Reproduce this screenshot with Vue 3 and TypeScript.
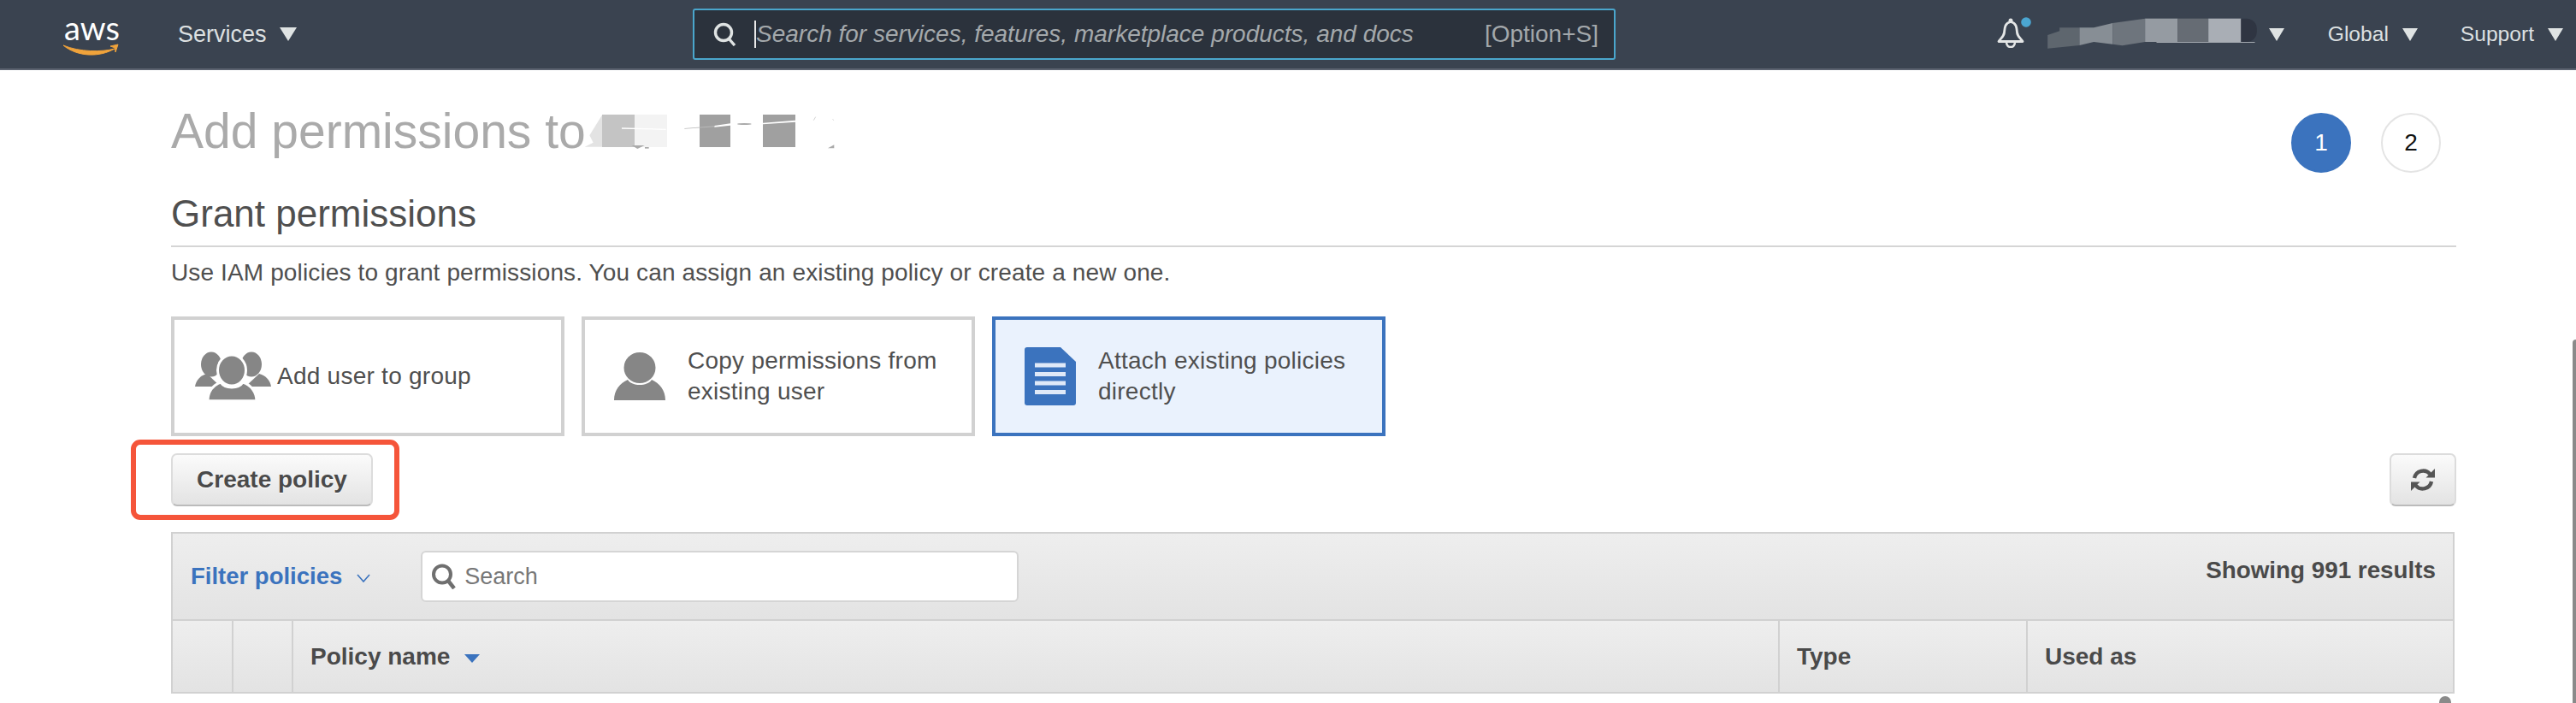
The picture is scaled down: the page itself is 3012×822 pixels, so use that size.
<script setup lang="ts">
const columns: { label: string; sorted?: boolean }[] = [
  { label: '' },
  { label: '' },
  { label: 'Policy name', sorted: true },
  { label: 'Type' },
  { label: 'Used as' },
]
</script>

<template>
  <div class="page">
    <header class="topbar">
      <div class="top-left">
        <svg class="logo" viewBox="0 -16 70 60" width="70" height="60">
          <text x="2" y="22" class="logo-text">aws</text>
          <path d="M1 28 C18 42 44 42 61 32 C46 36 20 36 1 28 Z" fill="#f0a33b" stroke="#f0a33b" stroke-width="1" />
          <path d="M56 29 L65 27 L62 36 L61.5 31 Z" fill="#f0a33b" stroke="#f0a33b" stroke-width="1" />
        </svg>
        <span class="nav services">Services</span>
        <i class="caret big"></i>
      </div>

      <div class="search">
        <svg class="search-icon" viewBox="0 0 28 28" width="28" height="28">
          <circle cx="12" cy="12" r="9.5" fill="none" stroke="#dfe3e3" stroke-width="3.4" />
          <path d="M18 19 L25 27" stroke="#dfe3e3" stroke-width="3.4" />
        </svg>
        <span class="cursor"></span>
        <span class="placeholder">Search for services, features, marketplace products, and docs</span>
        <span class="shortcut">[Option+S]</span>
      </div>

      <div class="top-right">
        <svg class="bell" viewBox="0 0 40 36" width="40" height="36">
          <path d="M16 5.5 C9 7 9 13 8.5 18 C8 23 4 25 2 28.5 L30 28.5 C28 25 24 23 23.5 18 C23 13 23 7 16 5.5 Z" fill="none" stroke="#e4e6e6" stroke-width="2.8" stroke-linejoin="round" />
          <path d="M11 29 C11 37 21 37 21 29" fill="none" stroke="#e4e6e6" stroke-width="2.6" />
          <circle cx="16" cy="4" r="2.5" fill="#e4e6e6" />
          <circle cx="34" cy="6" r="5.8" fill="#4ba6d1" />
        </svg>
        <svg class="redact" viewBox="225 25 740 120" width="247" height="40">
          <rect x="880" y="30" width="82" height="82" rx="36" fill="#2f3542" />
          <path d="M610 112 H955 V115 H610 Z" fill="#cfd2d5" opacity="0.7" />
          <path d="M228 88 L270 74 V62 H340 V124 L228 135 Z" fill="#5e666e" />
          <path d="M340 62 H390 L456 46 V120 L390 112 L340 124 Z" fill="#878e95" />
          <path d="M456 46 L570 30 V112 L490 125 L456 120 Z" fill="#6e757d" />
          <rect x="570" y="30" width="114" height="82" fill="#959ba2" />
          <rect x="684" y="30" width="108" height="82" fill="#666c74" />
          <rect x="792" y="30" width="114" height="82" fill="#a9aeb5" />
        </svg>
        <i class="caret first"></i>
        <span class="nav global">Global</span>
        <i class="caret"></i>
        <span class="nav support">Support</span>
        <i class="caret"></i>
      </div>
    </header>

    <main class="content">
      <div class="title-row">
        <div class="title-group">
          <h1 class="title">Add permissions to</h1>
          <svg class="title-redact" viewBox="60 30 900 150" width="300" height="50">
            <path d="M65 155 L95 140 L82 115 L125 45 L150 42 V155 Z" fill="#e3e3e3" />
            <rect x="126" y="42" width="114" height="114" fill="#c4c4c4" />
            <rect x="240" y="42" width="114" height="114" fill="#f3f3f3" />
            <path d="M195 88 L350 92 V96 L195 92 Z" fill="#fff" />
            <path d="M230 150 H275 L250 162 Z" fill="#aaa" />
            <path d="M276 156 H290 V161 H276 Z" fill="#aaa" />
            <rect x="468" y="42" width="108" height="114" fill="#a0a0a0" />
            <path d="M520 81 L576 73 V80 L520 86 Z" fill="#fff" />
            <path d="M415 90 L520 82 L520 85 L415 92 Z" fill="#bbb" />
            <ellipse cx="625" cy="75" rx="25" ry="3" fill="#aaa" />
            <rect x="690" y="42" width="114" height="114" fill="#a0a0a0" />
            <path d="M682 72 L804 62 V68 L690 76 Z" fill="#fff" />
            <path d="M918 160 L940 148 V160 Z" fill="#aaa" />
            <path d="M868 62 L875 50" stroke="#bbb" stroke-width="2" />
            <path d="M935 58 L938 62" stroke="#bbb" stroke-width="2" />
          </svg>
        </div>
        <div class="steps">
          <span class="step active">1</span>
          <span class="step">2</span>
        </div>
      </div>

      <h2 class="section">Grant permissions</h2>
      <p class="lead">Use IAM policies to grant permissions. You can assign an existing policy or create a new one.</p>

      <div class="cards">
        <div class="card card-group">
          <span class="card-icon">
            <svg viewBox="0 0 90 58" width="90" height="58">
              <ellipse cx="19" cy="15" rx="12" ry="14.5" fill="#868686" />
              <ellipse cx="66" cy="15" rx="12" ry="14.5" fill="#868686" />
              <path d="M0 41 C1 34 6 28 14 26 L30 41 Z" fill="#868686" />
              <path d="M89 41 C88 34 83 28 75 26 L59 41 Z" fill="#868686" />
              <ellipse cx="43" cy="22" rx="16.5" ry="18" fill="#868686" stroke="#fff" stroke-width="3" />
              <path d="M15 58 C15 47 21 39 30 36 C35 44 51 44 56 36 C65 39 72 47 72 58 Z" fill="#868686" stroke="#fff" stroke-width="3" />
              <rect x="10" y="56.5" width="70" height="2" fill="#fff" />
            </svg>
          </span>
          <span class="card-text">Add user to group</span>
        </div>
        <div class="card">
          <span class="card-icon">
            <svg viewBox="0 0 60 56" width="60" height="56">
              <ellipse cx="30" cy="18" rx="18.5" ry="18" fill="#868686" />
              <path d="M0 56 C0 44 7 36 16 32 C21 40 39 40 44 32 C53 36 60 44 60 56 Z" fill="#868686" />
            </svg>
          </span>
          <span class="card-text">Copy permissions from<br />existing user</span>
        </div>
        <div class="card selected">
          <span class="card-icon">
            <svg viewBox="0 0 60 68" width="60" height="68">
              <path d="M3 0 H42 L60 17 V65 Q60 68 57 68 H3 Q0 68 0 65 V3 Q0 0 3 0 Z" fill="#3b73be" />
              <rect x="12" y="18.500" width="36" height="5" fill="#dfe9f8" />
              <rect x="12" y="29" width="36" height="5" fill="#dfe9f8" />
              <rect x="12" y="39.500" width="36" height="5" fill="#dfe9f8" />
              <rect x="12" y="50" width="36" height="5" fill="#dfe9f8" />
            </svg>
          </span>
          <span class="card-text">Attach existing policies<br />directly</span>
        </div>
      </div>

      <div class="actions">
        <button class="btn primary" type="button">Create policy</button>
        <button class="btn refresh" type="button" aria-label="Refresh">
          <svg viewBox="0 0 28 28" width="28" height="28">
            <path d="M4 12 A10.500 10.500 0 0 1 22.500 7.500" fill="none" stroke="#555" stroke-width="4.400" />
            <path d="M28 1 V11.500 H17.500 Z" fill="#555" />
            <path d="M24 16 A10.500 10.500 0 0 1 5.500 20.500" fill="none" stroke="#555" stroke-width="4.400" />
            <path d="M0 27 V16.500 H10.500 Z" fill="#555" />
          </svg>
        </button>
        <span class="annotation"></span>
      </div>

      <section class="table">
        <div class="filter-row">
          <span class="filter-label">Filter policies</span>
          <svg class="chevron" viewBox="0 0 16 10" width="16" height="10">
            <path d="M1 1 L8 9 L15 1" fill="none" stroke="#3b73be" stroke-width="1.600" />
          </svg>
          <div class="filter-search">
            <svg viewBox="0 0 30 30" width="30" height="30">
              <circle cx="13" cy="12.500" r="10" fill="none" stroke="#6f6f6f" stroke-width="4" />
              <path d="M20 20 L27 29" stroke="#6f6f6f" stroke-width="4.500" />
            </svg>
            <span>Search</span>
          </div>
          <span class="count">Showing 991 results</span>
        </div>
        <div class="head-row">
          <div v-for="(col, i) in columns" :key="i" class="head-cell">
            <span v-if="col.label">{{ col.label }}</span>
            <i v-if="col.sorted" class="sort"></i>
          </div>
        </div>
      </section>
    </main>

    <span class="page-scroll"></span>
    <span class="table-scroll"></span>
  </div>
</template>

<style scoped>
.page {
  position: relative;
  width: 3012px;
  height: 822px;
  overflow: hidden;
  background: #fff;
  font-family: "Liberation Sans", Arial, sans-serif;
  color: #4f4f4f;
}
.topbar {
  box-sizing: border-box;
  height: 82px;
  display: grid;
  grid-template-columns: 810px 1079px 1fr;
  align-items: center;
  background: #3a4350;
  border-bottom: 2px solid #5c6370;
}
.top-left {
  display: flex;
  align-items: center;
  padding-left: 73px;
}
.logo {
  display: block;
  margin-top: -10px;
  margin-bottom: -8px;
}
.logo-text {
  font-family: Lato, "Liberation Sans", sans-serif;
  font-size: 38px;
  fill: #fff;
}
.nav {
  font-size: 24.6px;
  color: #dde0e1;
}
.services {
  margin-left: 65px;
  font-size: 27px;
}
.caret {
  display: block;
  width: 0;
  height: 0;
  margin-left: 16px;
  border-left: 9px solid transparent;
  border-right: 9px solid transparent;
  border-top: 15px solid #dfe3e3;
}
.caret.big {
  margin-left: 15px;
  border-left-width: 10px;
  border-right-width: 10px;
  border-top-width: 16px;
}
.caret.first {
  margin-left: 13px;
}
.search {
  box-sizing: border-box;
  height: 60px;
  display: flex;
  align-items: center;
  padding: 0 18px 0 22px;
  background: #2b323c;
  border: 2px solid #4aa6cc;
  border-radius: 3px;
}
.search-icon {
  flex: none;
}
.cursor {
  flex: none;
  width: 2px;
  height: 32px;
  margin-left: 20px;
  background: #e8e8e8;
}
.placeholder {
  font-size: 28px;
  font-style: italic;
  color: #a3a8ab;
  white-space: nowrap;
}
.shortcut {
  margin-left: auto;
  font-size: 28px;
  color: #a3a8ab;
}
.top-right {
  display: flex;
  align-items: center;
  justify-content: flex-end;
  padding-right: 15px;
}
.bell {
  display: block;
  margin-top: -4px;
}
.redact {
  display: block;
  margin: 0 0 0 18px;
}
.global {
  margin-left: 51px;
}
.support {
  margin-left: 50px;
}
.content {
  padding: 50px 142px 0 200px;
}
.title-row {
  display: flex;
  align-items: flex-start;
  justify-content: space-between;
  height: 70px;
  padding-right: 16px;
}
.title-group {
  display: flex;
  align-items: flex-start;
}
.title {
  margin: 0;
  font-size: 57px;
  font-weight: 400;
  line-height: 43px;
  color: #aaa;
  white-space: nowrap;
}
.title-redact {
  display: block;
  flex: none;
  margin-left: -3px;
  margin-top: -2px;
}
.steps {
  display: flex;
  gap: 35px;
}
.step {
  box-sizing: border-box;
  width: 70px;
  height: 70px;
  display: flex;
  align-items: center;
  justify-content: center;
  font-size: 28px;
  color: #111;
  border: 2px solid #e4e4e4;
  border-radius: 50%;
}
.step.active {
  background: #3b73be;
  border-color: #3b73be;
  color: #fff;
}
.section {
  margin: 23px -2px 0 0;
  padding-bottom: 12px;
  font-size: 44px;
  font-weight: 400;
  line-height: 50px;
  color: #4f4f4f;
  border-bottom: 2px solid #d5d5d5;
}
.lead {
  margin: 12px 0 0;
  font-size: 28px;
  line-height: 36px;
  letter-spacing: 0.13px;
  color: #4f4f4f;
}
.cards {
  display: flex;
  gap: 20px;
  margin-top: 33px;
}
.card {
  box-sizing: border-box;
  width: 460px;
  height: 140px;
  display: flex;
  align-items: center;
  border: 4px solid #d1d1d1;
}
.card-icon {
  box-sizing: border-box;
  flex: none;
  width: 120px;
  display: flex;
  padding-left: 34px;
}
.card-icon svg {
  display: block;
  flex: none;
}
.card-group .card-icon {
  padding-left: 24px;
}
.card.selected {
  background: #eaf2fd;
  border-color: #3b73be;
}
.card-text {
  font-size: 28px;
  line-height: 36px;
  letter-spacing: 0.25px;
  color: #4f4f4f;
}
.actions {
  position: relative;
  display: flex;
  justify-content: space-between;
  margin: 20px -2px 0 0;
}
.btn {
  box-sizing: border-box;
  height: 62px;
  font-family: inherit;
  font-size: 28px;
  font-weight: 700;
  color: #4a4a4a;
  background: linear-gradient(#fbfbfb, #e3e3e3);
  border: 2px solid #dcdcdc;
  border-bottom-color: #bbb;
  border-radius: 7px;
  text-shadow: 0 1px 0 #fff;
}
.primary {
  width: 236px;
  padding: 0;
}
.refresh {
  width: 78px;
  padding: 0;
  display: flex;
  align-items: center;
  justify-content: center;
}
.annotation {
  position: absolute;
  left: -47px;
  top: -16px;
  box-sizing: border-box;
  width: 314px;
  height: 94px;
  border: 6px solid #f5553a;
  border-radius: 11px;
}
.table {
  margin-top: 30px;
  border: 2px solid #d1d1d1;
}
.filter-row {
  box-sizing: border-box;
  height: 102px;
  display: flex;
  align-items: center;
  padding: 0 20px 0 21px;
  background: linear-gradient(#eee, #e3e3e3);
  border-bottom: 2px solid #d1d1d1;
}
.filter-label {
  font-size: 27.5px;
  font-weight: 700;
  color: #3b73be;
}
.chevron {
  display: block;
  margin: 4px 0 0 17px;
}
.filter-search {
  box-sizing: border-box;
  width: 699px;
  height: 60px;
  margin-left: 59px;
  display: flex;
  align-items: center;
  gap: 9px;
  padding-left: 10px;
  font-size: 27px;
  color: #777;
  background: #fff;
  border: 2px solid #d5d5d5;
  border-radius: 6px;
}
.filter-search svg {
  display: block;
}
.count {
  margin: -14px 0 0 auto;
  font-size: 27.8px;
  font-weight: 700;
  color: #4a4a4a;
}
.head-row {
  height: 83px;
  display: grid;
  grid-template-columns: 69px 70px 1fr 290px 499px;
  background: linear-gradient(#eee, #e3e3e3);
}
.head-cell {
  box-sizing: border-box;
  display: flex;
  align-items: center;
  padding-left: 20px;
  font-size: 28px;
  font-weight: 700;
  color: #4a4a4a;
  border-left: 2px solid #d1d1d1;
}
.head-cell:first-child {
  border-left: 0;
}
.sort {
  width: 0;
  height: 0;
  margin: 4px 0 0 17px;
  border-left: 9px solid transparent;
  border-right: 9px solid transparent;
  border-top: 10px solid #3b73be;
}
.page-scroll {
  position: absolute;
  right: 0;
  top: 397px;
  bottom: 0;
  width: 4px;
  background: #8a8a8a;
  border-top-left-radius: 4px;
}
.table-scroll {
  position: absolute;
  left: 2852px;
  top: 814px;
  width: 14px;
  height: 14px;
  background: #8a8a8a;
  border-radius: 7px;
}
</style>

<style>
html, body {
  margin: 0;
  overflow: hidden;
}
</style>
